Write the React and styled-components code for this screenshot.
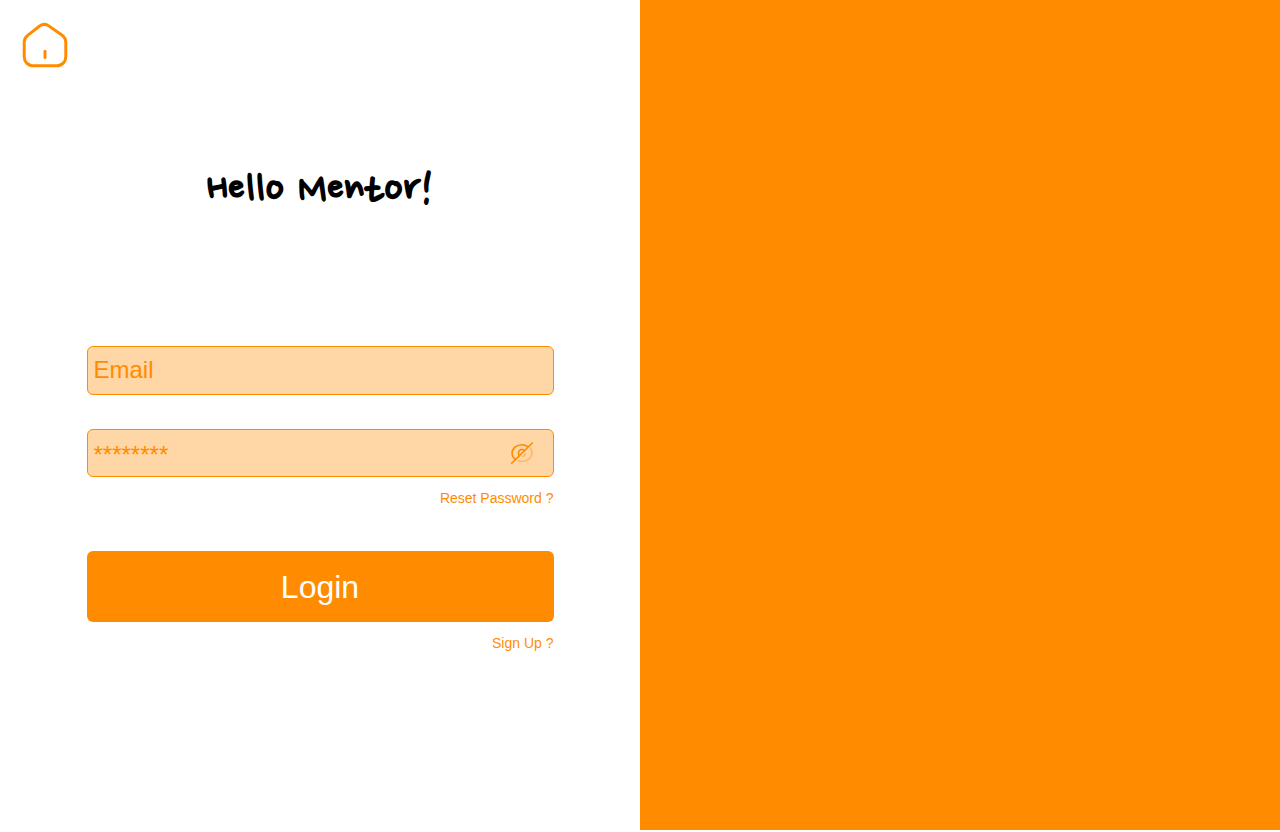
import React, { useState } from "react";
import styled, { createGlobalStyle } from "styled-components";

const orange = "#ff8c00";
const peach = "#ffd6a5";

const GlobalStyle = createGlobalStyle`
  *, *::before, *::after { box-sizing: border-box; }
  body {
    margin: 0;
    background: #fff;
    font-family: "Liberation Sans", Arial, sans-serif;
  }
`;

const Page = styled.main`
  display: grid;
  grid-template-columns: 1fr 1fr;
  min-height: calc(100vh - 2px);
`;

const FormSide = styled.section`
  display: flex;
  flex-direction: column;
  padding: 20px;
`;

const AccentSide = styled.aside`
  background: ${orange};
`;

const HomeLink = styled.a`
  align-self: flex-start;
  display: block;
  width: 50px;
  height: 50px;
  color: ${orange};
`;

const Title = styled.h1`
  margin: 94px 0 128px;
  text-align: center;
  font-family: "Ink Free", "Nanum Pen", "Shadows Into Light", Lato, sans-serif;
  font-size: 48px;
  font-weight: 700;
  line-height: 54px;
  color: #000;
`;

const Form = styled.form`
  display: flex;
  flex-direction: column;
  width: 100%;
  max-width: 467px;
  margin: 0 auto;
`;

const Field = styled.div`
  display: flex;
  align-items: center;
  height: ${(p) => p.$height};
  margin-bottom: ${(p) => p.$gap};
  border: 1px solid ${orange};
  border-radius: 6px;
  background: ${peach};
`;

const Input = styled.input`
  flex: 1;
  min-width: 0;
  height: 100%;
  padding: 0 6px 1px;
  border: 0;
  outline: 0;
  background: transparent;
  font: 24px "Liberation Sans", Arial, sans-serif;
  color: ${orange};
  &::placeholder { color: ${orange}; opacity: 1; }
`;

const PasswordInput = styled(Input)`
  padding: 4px 6px 0;
`;

const IconButton = styled.button`
  display: flex;
  margin-right: 19px;
  padding: 0;
  border: 0;
  background: none;
  color: ${orange};
  cursor: pointer;
`;

const TextLink = styled.a`
  align-self: flex-end;
  font-size: 14px;
  line-height: 16px;
  color: ${orange};
  text-decoration: none;
`;

const LoginButton = styled.button`
  height: 71px;
  margin: 45px 0 13px;
  padding: 2px 0 0;
  border: 0;
  border-radius: 6px;
  background: ${orange};
  font: 32px "Liberation Sans", Arial, sans-serif;
  color: #fff;
  cursor: pointer;
`;

const HomeIcon = () => (
  <svg width="50" height="50" viewBox="0 0 50 50" fill="none" stroke="currentColor" strokeWidth="3" strokeLinecap="round" strokeLinejoin="round" aria-hidden="true">
    <path d="M20 5.8 8 15.1C5.5 17.1 4.2 19.2 4.2 22.2V36.5C4.2 41.8 8 45.7 13 45.7H37C42 45.7 45.8 41.8 45.8 36.5V22.7C45.8 19.3 44.5 17 41.8 15.1L29.1 6.1C26.2 4 22.7 4 20 5.8Z" />
    <path d="M25 37.5V31.2" />
  </svg>
);

const EyeSlashIcon = () => (
  <svg width="24" height="24" viewBox="0 0 24 24" fill="none" stroke="currentColor" strokeWidth="1.6" strokeLinecap="round" strokeLinejoin="round" aria-hidden="true">
    <path d="M18 5.8C16.2 4.4 14.2 3.7 12 3.7C6.5 3.7 2 7.5 2 12C2 14.8 3.4 17 5.6 18.6" />
    <path d="M14.4 9.5A3.5 3.5 0 0 0 9.5 14.5" />
    <g opacity="0.4">
      <path d="M8.5 19.7C9.6 20.1 10.8 20.3 12 20.3C17.5 20.3 22 16.5 22 12C22 10.2 21.3 8.6 20.3 7.3" />
      <path d="M15.4 12.6A3.5 3.5 0 0 1 12.7 15.4" />
    </g>
    <path d="M22.3 2 1.7 22.3" />
  </svg>
);

export default function App() {
  const [visible, setVisible] = useState(false);
  return (
    <>
      <GlobalStyle />
      <Page>
        <FormSide>
          <HomeLink href="#home" aria-label="Home">
            <HomeIcon />
          </HomeLink>
          <Title>Hello Mentor!</Title>
          <Form onSubmit={(e) => e.preventDefault()}>
            <Field $height="49px" $gap="34px">
              <Input type="email" placeholder="Email" aria-label="Email" />
            </Field>
            <Field $height="48px" $gap="13px">
              <PasswordInput type={visible ? "text" : "password"} placeholder="********" aria-label="Password" />
              <IconButton type="button" aria-label={visible ? "Hide password" : "Show password"} onClick={() => setVisible(!visible)}>
                <EyeSlashIcon />
              </IconButton>
            </Field>
            <TextLink href="#reset">Reset Password ?</TextLink>
            <LoginButton type="submit">Login</LoginButton>
            <TextLink href="#signup">Sign Up ?</TextLink>
          </Form>
        </FormSide>
        <AccentSide />
      </Page>
    </>
  );
}
